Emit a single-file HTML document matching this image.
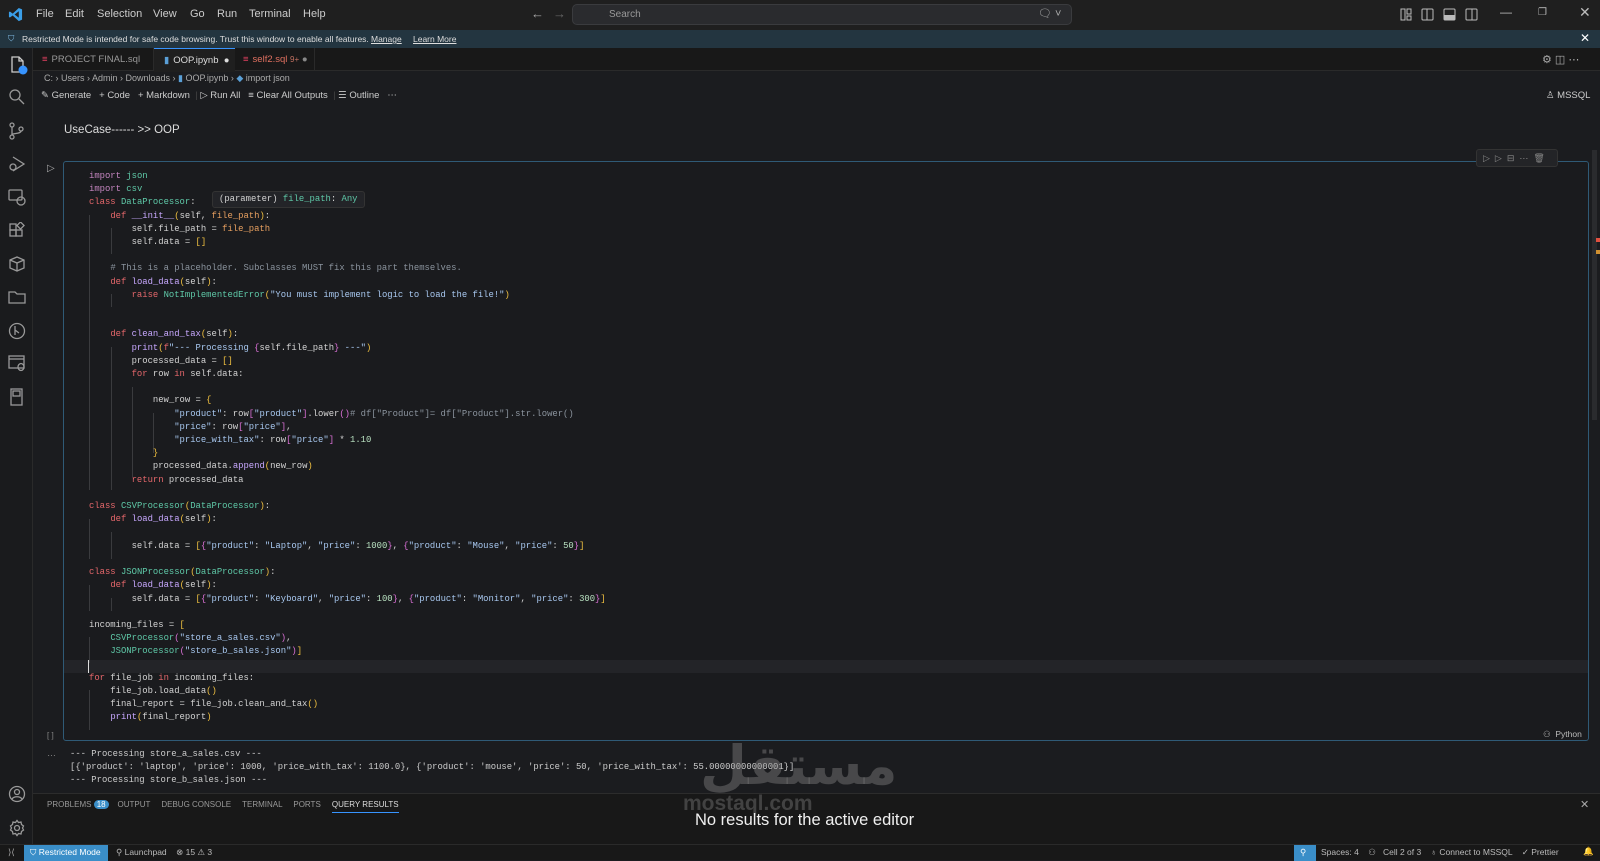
<!DOCTYPE html>
<html><head><meta charset="utf-8"><style>
*{margin:0;padding:0;box-sizing:border-box}
body{width:1600px;height:860px;background:#1b1c1f;overflow:hidden;position:relative;font-family:"Liberation Sans",sans-serif;color:#ccc;font-size:11px}
.abs{position:absolute;white-space:nowrap}
#title{left:0;top:0;width:1600px;height:30px;background:#1f1f1f}
#title .m{top:8px;font-size:11px;color:#ccc}
#search{left:572px;top:4px;width:500px;height:21px;background:#2a2b2e;border:1px solid #3a3b3e;border-radius:5px;color:#999;font-size:10px;padding:4px 0 0 36px}
#banner{left:0;top:30px;width:1600px;height:18px;background:#233540;font-size:8.5px;color:#ddd}
#act{left:0;top:48px;width:33px;height:796px;background:#1a1b1d;border-right:1px solid #2a2a2a}
#tabs{left:33px;top:48px;width:1567px;height:23px;background:#181818;border-bottom:1px solid #2a2a2a}
.tab{top:0;height:23px;font-size:9.5px;padding-top:6px}
.code{font-family:"Liberation Mono",monospace;font-size:8.9px;white-space:pre;line-height:13.2px;color:#d4d4d4}
.k{color:#e5676b}.i{color:#c586c0}.c{color:#5fc9a8}.f{color:#c8a8ff}.s{color:#a8c8f0}.cm{color:#8b949e}.p{color:#f0c040}.y{color:#da70d6}.o{color:#e8a060}.n{color:#b8e0c0}
.guide{position:absolute;width:1px;background:#3a3b3e}
#panel{left:33px;top:793px;width:1567px;height:51px;background:#181818;border-top:1px solid #2c2c2c}
#status{left:0;top:844px;width:1600px;height:16px;background:#181818;border-top:1px solid #2a2a2a;font-size:8.5px;color:#bbb}
svg{position:absolute}
</style></head><body>
<div id="title" class="abs">
 <svg style="left:8px;top:7px" width="15" height="15" viewBox="0 0 16 16"><path d="M11.5 1L5 7 2 4.8 1 5.4v5.2l1 .6L5 9l6.5 6 3.5-1.5V2.5z" fill="#3a9ee8"/><path d="M11.5 4.5L7 8l4.5 3.5z" fill="#1f1f1f"/></svg>
 <span class="abs m" style="left:36px">File</span><span class="abs m" style="left:65px">Edit</span><span class="abs m" style="left:97px">Selection</span><span class="abs m" style="left:153px">View</span><span class="abs m" style="left:190px">Go</span><span class="abs m" style="left:217px">Run</span><span class="abs m" style="left:249px">Terminal</span><span class="abs m" style="left:303px">Help</span>
 <span class="abs" style="left:531px;top:6px;font-size:13px;color:#aaa">←</span><span class="abs" style="left:553px;top:6px;font-size:13px;color:#666">→</span>
 <div id="search" class="abs">Search</div>
 <span class="abs" style="left:1038px;top:7px;color:#aaa;font-size:11px">🗨 ˅</span>
 <svg style="left:1400px;top:8px" width="90" height="14"><g fill="none" stroke="#bbb"><rect x="1" y="1" width="4" height="11"/><rect x="7" y="1" width="4" height="5"/><rect x="7" y="8" width="4" height="4"/><rect x="22" y="1" width="11" height="11" rx="1"/><line x1="27" y1="1" x2="27" y2="12"/><rect x="44" y="1" width="11" height="11" rx="1"/><rect x="66" y="1" width="11" height="11" rx="1"/><line x1="72" y1="1" x2="72" y2="12"/></g><rect x="44" y="7" width="11" height="5" fill="#bbb"/></svg>
 <span class="abs" style="left:1500px;top:5px;color:#bbb;font-size:12px">—</span>
 <span class="abs" style="left:1538px;top:7px;color:#bbb;font-size:10px">❐</span>
 <span class="abs" style="left:1579px;top:4px;color:#bbb;font-size:14px">✕</span>
</div>
<div id="banner" class="abs"><span class="abs" style="left:8px;top:3px;color:#7fb8e0">⛉</span><span class="abs" style="left:22px;top:4px">Restricted Mode is intended for safe code browsing. Trust this window to enable all features.</span><span class="abs" style="left:371px;top:4px;text-decoration:underline">Manage</span><span class="abs" style="left:413px;top:4px;text-decoration:underline">Learn More</span><span class="abs" style="left:1580px;top:1px;font-size:12px;color:#fff">✕</span></div>
<div id="act" class="abs">
 <svg style="left:8px;top:7px" width="20" height="20" viewBox="0 0 20 20" fill="none" stroke="#ccc" stroke-width="1.3"><path d="M4 2h7l4 4v11H4z"/><path d="M11 2v4h4"/><circle cx="15" cy="15" r="4.5" fill="#3794ff" stroke="none"/></svg>
 <svg style="left:8px;top:40px" width="18" height="18" fill="none" stroke="#999" stroke-width="1.3"><circle cx="7" cy="7" r="5"/><path d="M11 11l5 5"/></svg>
 <svg style="left:8px;top:74px" width="18" height="18" fill="none" stroke="#999" stroke-width="1.3"><circle cx="4" cy="3" r="2"/><circle cx="4" cy="15" r="2"/><circle cx="13" cy="7" r="2"/><path d="M4 5v8M13 9c0 3-9 2-9 4"/></svg>
 <svg style="left:8px;top:107px" width="18" height="18" fill="none" stroke="#999" stroke-width="1.3"><path d="M5 2l11 7-11 7"/><circle cx="5" cy="12" r="3"/></svg>
 <svg style="left:8px;top:140px" width="18" height="18" fill="none" stroke="#999" stroke-width="1.3"><rect x="1" y="2" width="13" height="10" rx="1"/><circle cx="13" cy="13" r="4"/></svg>
 <svg style="left:8px;top:174px" width="18" height="18" fill="none" stroke="#999" stroke-width="1.3"><rect x="2" y="8" width="6" height="6"/><rect x="8" y="8" width="6" height="6"/><rect x="2" y="2" width="6" height="6"/><rect x="10" y="1" width="5" height="5" transform="rotate(45 12.5 3.5)"/></svg>
 <svg style="left:8px;top:207px" width="18" height="18" fill="none" stroke="#999" stroke-width="1.3"><path d="M2 5l7-3 7 3v8l-7 3-7-3z"/><path d="M2 5l7 3 7-3M9 8v8"/></svg>
 <svg style="left:8px;top:240px" width="18" height="18" fill="none" stroke="#999" stroke-width="1.3"><path d="M1 4h6l2 2h8v9H1z"/></svg>
 <svg style="left:8px;top:274px" width="18" height="18" fill="none" stroke="#999" stroke-width="1.3"><circle cx="9" cy="9" r="7.5"/><path d="M7 4v9M7 8l4 3"/></svg>
 <svg style="left:8px;top:306px" width="18" height="18" fill="none" stroke="#999" stroke-width="1.3"><rect x="1" y="2" width="15" height="12"/><path d="M1 5h15"/><ellipse cx="13" cy="13" rx="3" ry="3.5"/></svg>
 <svg style="left:9px;top:340px" width="18" height="18" fill="none" stroke="#999" stroke-width="1.3"><rect x="2" y="1" width="11" height="16"/><rect x="4" y="3" width="7" height="5"/></svg>
 <svg style="left:8px;top:737px" width="18" height="18" fill="none" stroke="#999" stroke-width="1.3"><circle cx="9" cy="9" r="7.5"/><circle cx="9" cy="7" r="2.5"/><path d="M4 14c2-3 8-3 10 0"/></svg>
 <svg style="left:8px;top:771px" width="18" height="18" fill="none" stroke="#999" stroke-width="1.3"><circle cx="9" cy="9" r="2.5"/><path d="M9 1.5l1.5 2 2.5-.5.5 2.5 2 1.5-1 2 1 2-2 1.5-.5 2.5-2.5-.5L9 16.5l-1.5-2-2.5.5-.5-2.5-2-1.5 1-2-1-2 2-1.5.5-2.5 2.5.5z"/></svg>
</div>
<div id="tabs" class="abs">
 <div class="abs tab" style="left:0;width:121px;color:#999;border-right:1px solid #2a2a2a"><span style="color:#e04060;margin:0 4px 0 9px">≡</span>PROJECT FINAL.sql</div>
 <div class="abs tab" style="left:121px;width:81px;background:#1f1f1f;color:#ddd;border-top:1px solid #3794ff;height:24px"><span style="color:#5a9fd6;margin:0 4px 0 10px">▮</span>OOP.ipynb &nbsp;●</div>
 <div class="abs tab" style="left:202px;width:80px;color:#e07060;border-right:1px solid #2a2a2a"><span style="color:#e04060;margin:0 4px 0 8px">≡</span>self2.sql <span style="color:#c07060;font-size:8px">9+</span> <span style="color:#888">●</span></div>
 <span class="abs" style="left:1509px;top:5px;color:#aaa">⚙ ◫ ⋯</span>
</div>
<div class="abs" style="left:44px;top:73px;font-size:9px;color:#aaa">C: › Users › Admin › Downloads › <span style="color:#5a9fd6">▮</span> OOP.ipynb › <span style="color:#5a9fd6">◆</span> import json</div>
<div class="abs" style="left:41px;top:90px;font-size:9.5px;color:#ccc">✎ Generate &nbsp; + Code &nbsp; + Markdown &nbsp;<span style="color:#444">|</span> ▷ Run All &nbsp; ≡ Clear All Outputs &nbsp;<span style="color:#444">|</span> ☰ Outline &nbsp; ⋯</div>
<div class="abs" style="left:1546px;top:90px;font-size:9.5px;color:#ccc">♙ MSSQL</div>
<div class="abs" style="left:64px;top:124px;font-size:11.5px;color:#ddd">UseCase------ &gt;&gt; OOP</div>
<div class="abs" style="left:1592px;top:150px;width:5px;height:270px;background:#2a2b2e"></div>
<div class="abs" style="left:1596px;top:238px;width:4px;height:4px;background:#e05040"></div>
<div class="abs" style="left:1596px;top:250px;width:4px;height:4px;background:#d09030"></div>
<span class="abs" style="left:47px;top:163px;color:#aaa;font-size:10px">▷</span>
<div class="abs" style="left:63px;top:161px;width:1526px;height:580px;border:1px solid #2f5a76;border-radius:3px;background:#1a1b1e"></div>
<div class="abs" style="left:1476px;top:149px;width:82px;height:18px;background:#232427;border:1px solid #333;border-radius:3px;color:#888;font-size:9px;padding:3px 0 0 6px;letter-spacing:5px">▷▷⊟⋯🗑</div>
<div class="abs" style="left:64px;top:660px;width:1524px;height:13px;background:#232428"></div>
<div class="abs" style="left:88px;top:660px;width:1px;height:13px;background:#ddd"></div>
<div class="guide" style="left:89px;top:215px;height:275px"></div>
<div class="guide" style="left:111px;top:228px;height:26px"></div>
<div class="guide" style="left:111px;top:294px;height:13px"></div>
<div class="guide" style="left:111px;top:347px;height:143px"></div>
<div class="guide" style="left:132px;top:387px;height:90px"></div>
<div class="guide" style="left:153px;top:413px;height:40px"></div>
<div class="guide" style="left:89px;top:519px;height:40px"></div>
<div class="guide" style="left:111px;top:532px;height:27px"></div>
<div class="guide" style="left:89px;top:585px;height:26px"></div>
<div class="guide" style="left:111px;top:598px;height:13px"></div>
<div class="guide" style="left:89px;top:637px;height:26px"></div>
<div class="guide" style="left:89px;top:690px;height:40px"></div>
<div class="abs code" style="left:89px;top:170px"><span class="i">import</span> <span class="c">json</span>
<span class="i">import</span> <span class="c">csv</span>
<span class="k">class</span> <span class="c">DataProcessor</span>:
    <span class="k">def</span> <span class="f">__init__</span><span class="p">(</span>self, <span class="o">file_path</span><span class="p">)</span>:
        self.file_path = <span class="o">file_path</span>
        self.data = <span class="p">[]</span>

    <span class="cm"># This is a placeholder. Subclasses MUST fix this part themselves.</span>
    <span class="k">def</span> <span class="f">load_data</span><span class="p">(</span>self<span class="p">)</span>:
        <span class="k">raise</span> <span class="c">NotImplementedError</span><span class="p">(</span><span class="s">"You must implement logic to load the file!"</span><span class="p">)</span>


    <span class="k">def</span> <span class="f">clean_and_tax</span><span class="p">(</span>self<span class="p">)</span>:
        <span class="f">print</span><span class="p">(</span><span class="k">f</span><span class="s">"--- Processing </span><span class="y">{</span>self.file_path<span class="y">}</span><span class="s"> ---"</span><span class="p">)</span>
        processed_data = <span class="p">[]</span>
        <span class="k">for</span> row <span class="k">in</span> self.data:

            new_row = <span class="p">{</span>
                <span class="s">"product"</span>: row<span class="y">[</span><span class="s">"product"</span><span class="y">]</span>.lower<span class="y">()</span><span class="cm"># df["Product"]= df["Product"].str.lower()</span>
                <span class="s">"price"</span>: row<span class="y">[</span><span class="s">"price"</span><span class="y">]</span>,
                <span class="s">"price_with_tax"</span>: row<span class="y">[</span><span class="s">"price"</span><span class="y">]</span> * <span class="n">1.10</span>
            <span class="p">}</span>
            processed_data.<span class="f">append</span><span class="p">(</span>new_row<span class="p">)</span>
        <span class="k">return</span> processed_data

<span class="k">class</span> <span class="c">CSVProcessor</span><span class="p">(</span><span class="c">DataProcessor</span><span class="p">)</span>:
    <span class="k">def</span> <span class="f">load_data</span><span class="p">(</span>self<span class="p">)</span>:

        self.data = <span class="p">[</span><span class="y">{</span><span class="s">"product"</span>: <span class="s">"Laptop"</span>, <span class="s">"price"</span>: <span class="n">1000</span><span class="y">}</span>, <span class="y">{</span><span class="s">"product"</span>: <span class="s">"Mouse"</span>, <span class="s">"price"</span>: <span class="n">50</span><span class="y">}</span><span class="p">]</span>

<span class="k">class</span> <span class="c">JSONProcessor</span><span class="p">(</span><span class="c">DataProcessor</span><span class="p">)</span>:
    <span class="k">def</span> <span class="f">load_data</span><span class="p">(</span>self<span class="p">)</span>:
        self.data = <span class="p">[</span><span class="y">{</span><span class="s">"product"</span>: <span class="s">"Keyboard"</span>, <span class="s">"price"</span>: <span class="n">100</span><span class="y">}</span>, <span class="y">{</span><span class="s">"product"</span>: <span class="s">"Monitor"</span>, <span class="s">"price"</span>: <span class="n">300</span><span class="y">}</span><span class="p">]</span>

incoming_files = <span class="p">[</span>
    <span class="c">CSVProcessor</span><span class="y">(</span><span class="s">"store_a_sales.csv"</span><span class="y">)</span>,
    <span class="c">JSONProcessor</span><span class="y">(</span><span class="s">"store_b_sales.json"</span><span class="y">)</span><span class="p">]</span>

<span class="k">for</span> file_job <span class="k">in</span> incoming_files:
    file_job.load_data<span class="p">()</span>
    final_report = file_job.clean_and_tax<span class="p">()</span>
    <span class="f">print</span><span class="p">(</span>final_report<span class="p">)</span></div>
<div class="abs code" style="left:212px;top:191px;background:#232428;border:1px solid #333;border-radius:3px;padding:0 6px;line-height:15px">(parameter) <span class="c">file_path</span>: <span class="c">Any</span></div>
<span class="abs" style="left:47px;top:731px;font-size:8px;color:#888">[ ]</span>
<span class="abs" style="left:1543px;top:729px;font-size:8.5px;color:#bbb">⚇ &nbsp;Python</span>
<span class="abs" style="left:47px;top:748px;font-size:9px;color:#888">…</span>
<div class="abs code" style="left:70px;top:748px;color:#ccc">--- Processing store_a_sales.csv ---
[{'product': 'laptop', 'price': 1000, 'price_with_tax': 1100.0}, {'product': 'mouse', 'price': 50, 'price_with_tax': 55.00000000000001}]
--- Processing store_b_sales.json ---</div>
<div class="abs" style="left:700px;top:738px;font-size:54px;font-weight:bold;color:rgba(140,140,140,0.4);font-family:'DejaVu Sans',sans-serif;line-height:56px">مستقل</div>
<div id="panel" class="abs">
 <div class="abs" style="left:14px;top:6px;font-size:8px;color:#999">PROBLEMS <span style="background:#3a8ec8;color:#fff;border-radius:7px;padding:0 3px">18</span> &nbsp;&nbsp; OUTPUT &nbsp;&nbsp;&nbsp; DEBUG CONSOLE &nbsp;&nbsp;&nbsp; TERMINAL &nbsp;&nbsp;&nbsp; PORTS &nbsp;&nbsp;&nbsp; <span style="color:#ddd;border-bottom:1px solid #3794ff;padding-bottom:3px">QUERY RESULTS</span></div>
 <span class="abs" style="left:1547px;top:4px;color:#aaa;font-size:11px">✕</span>
 <div class="abs" style="left:650px;top:-2px;font-size:21px;color:rgba(130,130,130,0.4);font-weight:bold">mostaql.com</div>
 <div class="abs" style="left:662px;top:17px;font-size:16.5px;color:#f0f0f0">No results for the active editor</div>
</div>
<div id="status" class="abs">
 <span class="abs" style="left:8px;top:2px;color:#aaa">⟩⟨</span>
 <div class="abs" style="left:24px;top:0;width:84px;height:16px;background:#3a8ec8;color:#fff;padding:2px 0 0 6px">⛉ Restricted Mode</div>
 <span class="abs" style="left:116px;top:2px">⚲ Launchpad &nbsp;&nbsp; ⊗ 15 ⚠ 3</span>
 <div class="abs" style="left:1294px;top:0;width:22px;height:16px;background:#3a8ec8;color:#fff;padding:2px 0 0 6px">⚲</div>
 <span class="abs" style="left:1321px;top:2px">Spaces: 4 &nbsp;&nbsp; ⚇ &nbsp; Cell 2 of 3 &nbsp;&nbsp; ♁ Connect to MSSQL &nbsp;&nbsp; ✓ Prettier</span>
 <span class="abs" style="left:1583px;top:1px">🔔</span>
</div>
</body></html>
